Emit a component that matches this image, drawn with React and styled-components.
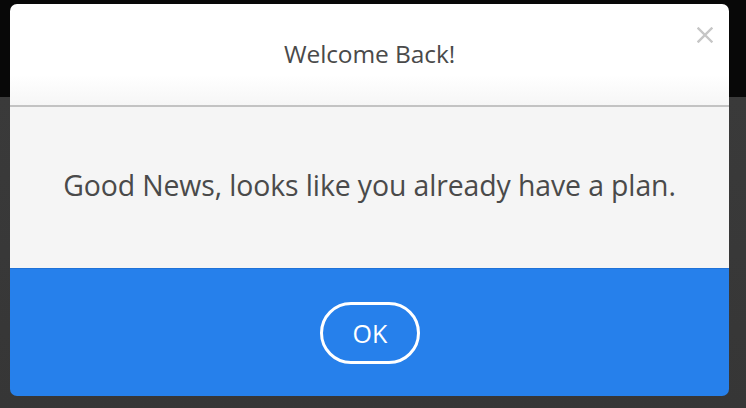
import styled, { createGlobalStyle } from "styled-components";

const GlobalStyle = createGlobalStyle`
  html, body {
    margin: 0;
    padding: 0;
    background: #383838;
  }
  body {
    font-family: "Open Sans", "Liberation Sans", sans-serif;
  }
`;

const Backdrop = styled.div`
  width: 746px;
  height: 408px;
  overflow: hidden;
  background: linear-gradient(
    to bottom,
    #080808 0,
    #080808 97px,
    #3a3a3a 97px,
    #363636 100%
  );
  padding-top: 4px;
  box-sizing: border-box;
`;

const Modal = styled.div`
  width: 719px;
  height: 392px;
  margin-left: 10px;
  border-radius: 7px;
  overflow: hidden;
  display: flex;
  flex-direction: column;
`;

const Header = styled.div`
  position: relative;
  height: 101px;
  flex-shrink: 0;
  background: linear-gradient(to bottom, #ffffff 0, #ffffff 70%, #f6f6f6 100%);
  border-bottom: 2px solid #c3c3c3;
  display: flex;
  align-items: center;
  justify-content: center;
`;

const Title = styled.h1`
  margin: 0;
  padding-bottom: 2px;
  font-size: 24.5px;
  font-weight: 400;
  color: #4a4a4a;
  letter-spacing: -0.1px;
`;

const CloseButton = styled.button`
  position: absolute;
  top: 20px;
  right: 13px;
  width: 22px;
  height: 22px;
  padding: 0;
  border: none;
  background: none;
  display: flex;
  align-items: center;
  justify-content: center;
  cursor: pointer;
`;

const Body = styled.div`
  height: 161px;
  flex-shrink: 0;
  background: #f5f5f5;
  display: flex;
  align-items: center;
  justify-content: center;
`;

const Message = styled.p`
  margin: 0;
  padding-bottom: 5px;
  font-size: 28.4px;
  color: #4a4a4a;
  letter-spacing: -0.1px;
`;

const Footer = styled.div`
  flex: 1;
  background: #2680eb;
  border-top: 1px solid #1f72d8;
  display: flex;
  align-items: center;
  justify-content: center;
`;

const OkButton = styled.button`
  width: 100px;
  height: 62px;
  margin-left: 1px;
  border: 3px solid #ffffff;
  border-radius: 31px;
  background: transparent;
  color: #ffffff;
  font-family: "Open Sans", "Liberation Sans", sans-serif;
  font-size: 25px;
  font-weight: 400;
  cursor: pointer;
`;

const App = () => {
  return (
    <>
      <GlobalStyle />
      <Backdrop>
        <Modal>
          <Header>
            <Title>Welcome Back!</Title>
            <CloseButton aria-label="Close">
              <svg width="16" height="16" viewBox="0 0 16 16">
                <path
                  d="M1.5 1.5 L14.5 14.5 M14.5 1.5 L1.5 14.5"
                  stroke="#c6c6c6"
                  strokeWidth="2.4"
                  strokeLinecap="square"
                />
              </svg>
            </CloseButton>
          </Header>
          <Body>
            <Message>Good News, looks like you already have a plan.</Message>
          </Body>
          <Footer>
            <OkButton>OK</OkButton>
          </Footer>
        </Modal>
      </Backdrop>
    </>
  );
};

export default App;
